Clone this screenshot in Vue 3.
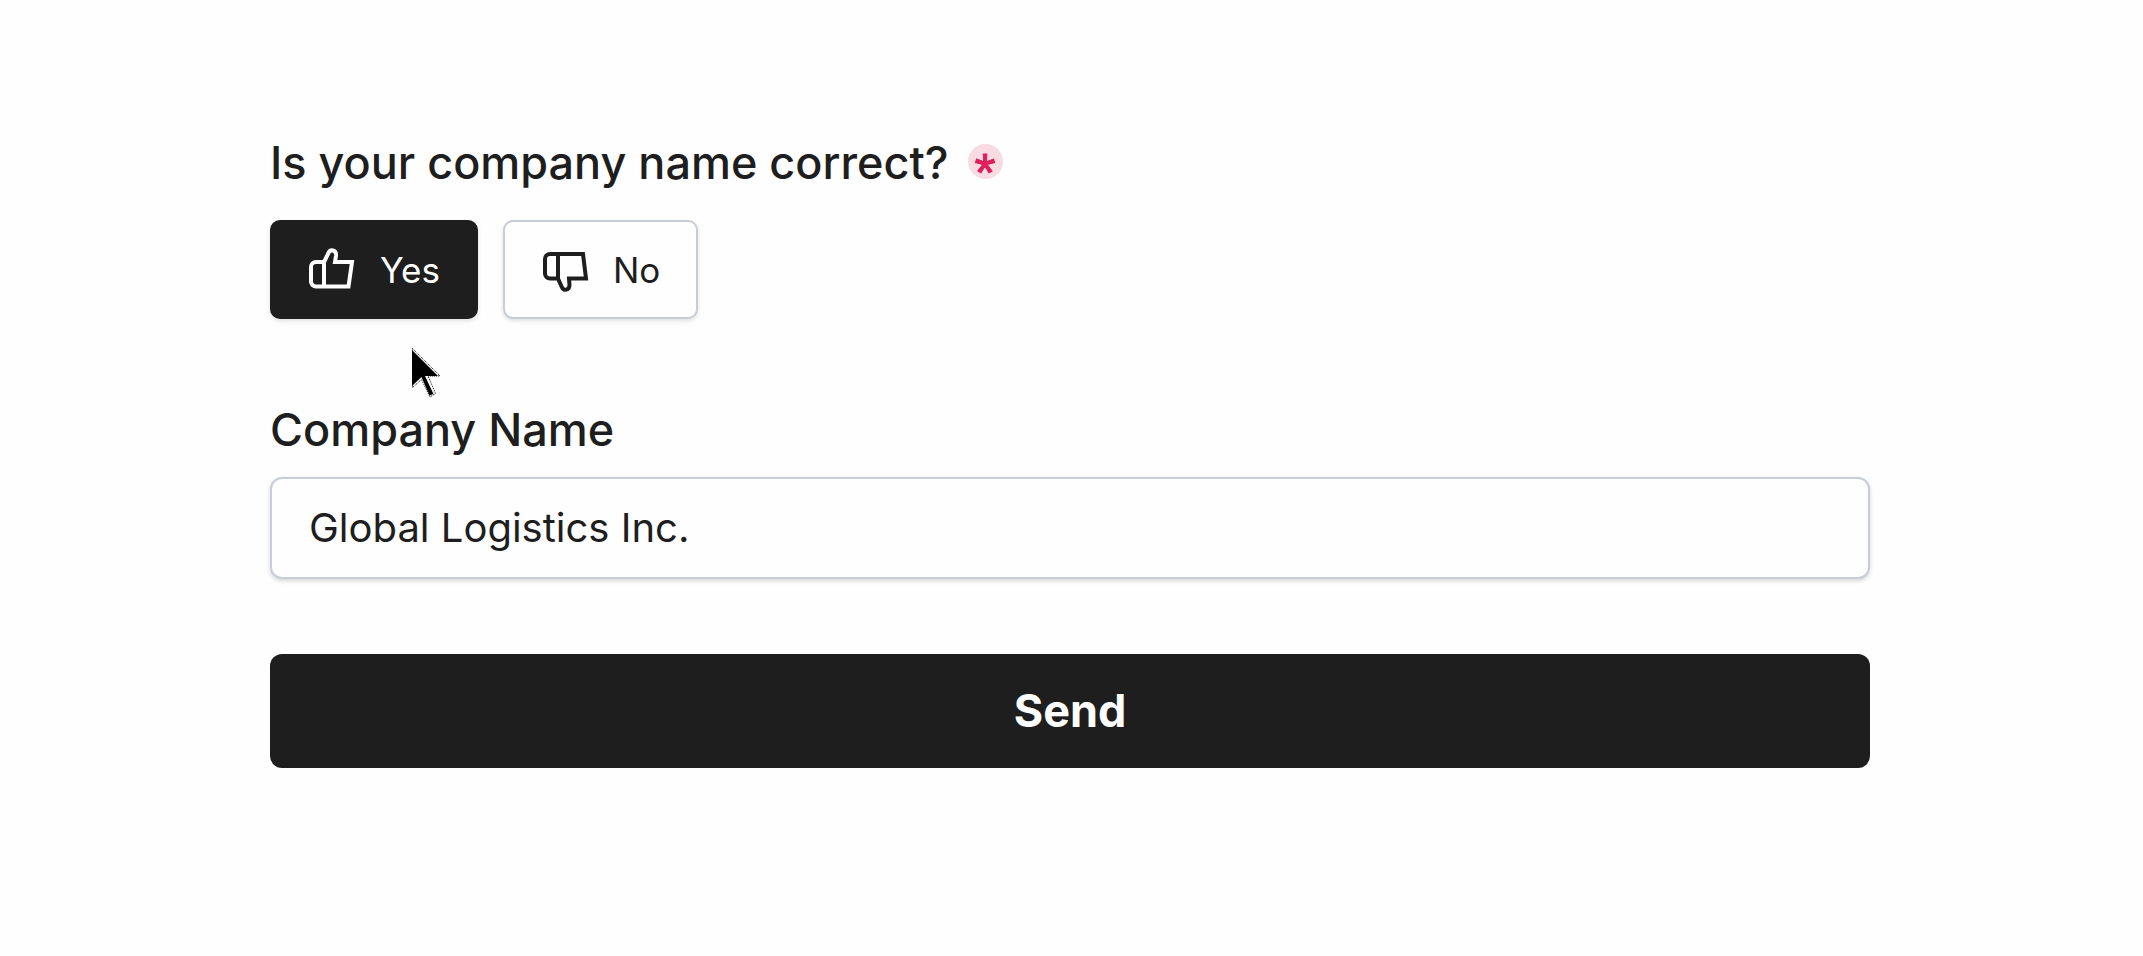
<script setup>
import { ref } from 'vue'

const answer = ref('yes')
const company = ref('Global Logistics Inc.')
</script>

<template>
  <form class="form" @submit.prevent>
    <fieldset class="question">
      <legend class="label">
        <span>Is your company name correct?</span>
        <span class="required">*</span>
      </legend>
      <div class="choices">
        <button type="button" class="choice" :class="{ selected: answer === 'yes' }" :aria-pressed="answer === 'yes'" @click="answer = 'yes'">
          <svg class="icon" viewBox="0 0 48 48" aria-hidden="true">
            <path d="M16 16H8a5 5 0 0 0-5 5V35.500a5 5 0 0 0 5 5H40.500L44 16H27L28 9.500C28.500 3.500 22 3 20.500 7L16 16V40.500" />
          </svg>
          <span>Yes</span>
        </button>
        <button type="button" class="choice" :class="{ selected: answer === 'no' }" :aria-pressed="answer === 'no'" @click="answer = 'no'">
          <svg class="icon" viewBox="0 0 48 48" aria-hidden="true">
            <path d="M17 32.500H9a5 5 0 0 1-5-5V13a5 5 0 0 1 5-5H42L45 32.500H28L28.500 39C28.500 44.500 22.500 45 21 41.500L17 32.500V8" />
          </svg>
          <span>No</span>
        </button>
        <svg class="pointer" viewBox="0 0 30 52" aria-hidden="true">
          <path class="pointer-edge" d="M0.500 0.500L28 28H16L23.500 45.500L18 49L9.500 31.500L0.500 39.500Z" />
          <path class="pointer-body" d="M0 2L26 28H13L21.500 46L17.500 47.500L9.500 29L0 38Z" />
        </svg>
      </div>
    </fieldset>
    <div class="field">
      <label class="label" for="company">Company Name</label>
      <input id="company" v-model="company" class="input" type="text" />
    </div>
    <button type="submit" class="send">Send</button>
  </form>
</template>

<style>
body {
  background: #fefefe;
}
</style>

<style scoped>
.form {
  box-sizing: border-box;
  padding: 135px 273px 60px 270px;
  font-family: Inter, "Liberation Sans", sans-serif;
  color: #1e1e1e;
}
.question {
  margin: 0 0 83px;
  padding: 0;
  border: 0;
  min-width: 0;
}
.label {
  display: flex;
  align-items: center;
  gap: 19px;
  padding: 0;
  font-size: 45px;
  line-height: 56px;
  font-weight: 500;
}
.required {
  display: flex;
  justify-content: center;
  width: 35px;
  height: 35px;
  margin-bottom: 4px;
  border-radius: 50%;
  background: #f8dbe3;
  color: #de1f5c;
  font-family: "Liberation Sans", sans-serif;
  font-size: 54px;
  line-height: 56px;
  font-weight: 400;
  -webkit-text-stroke: 1px #de1f5c;
}
.choices {
  position: relative;
  display: flex;
  gap: 25px;
  padding-top: 29px;
}
.choice {
  display: flex;
  align-items: center;
  gap: 24px;
  box-sizing: border-box;
  padding: 27px 36px 25px;
  border: 2px solid #c9cdd7;
  border-radius: 10px;
  background: #fefefe;
  box-shadow: 0 2px 4px rgba(0, 0, 0, 0.12);
  color: #1e1e1e;
  font-family: inherit;
  font-size: 35px;
  line-height: 43px;
  cursor: pointer;
}
.choice.selected {
  border-color: #1e1e1e;
  background: #1e1e1e;
  color: #fefefe;
}
.icon {
  width: 48px;
  height: 48px;
  margin: -4px 0 -2px;
  fill: none;
  stroke: currentColor;
  stroke-width: 4;
}
.pointer {
  position: absolute;
  left: 142px;
  top: 157px;
  width: 30px;
  height: 52px;
}
.pointer-edge {
  fill: #fff;
  stroke: #000;
  stroke-width: 1;
  stroke-dasharray: 1 1;
}
.pointer-body {
  fill: #000;
}
.field {
  margin-bottom: 75px;
}
.input {
  display: block;
  box-sizing: border-box;
  width: 100%;
  margin-top: 19px;
  padding: 25px 37px;
  border: 2px solid #c9cdd7;
  border-radius: 12px;
  background: #fefefe;
  box-shadow: 0 2px 4px rgba(0, 0, 0, 0.16);
  color: #1e1e1e;
  font-family: inherit;
  font-size: 40px;
  line-height: 48px;
}
.send {
  display: block;
  width: 100%;
  padding: 29px;
  border: 0;
  border-radius: 12px;
  background: #1e1e1e;
  color: #fefefe;
  font-family: inherit;
  font-size: 45px;
  line-height: 56px;
  font-weight: 700;
  cursor: pointer;
}
</style>
